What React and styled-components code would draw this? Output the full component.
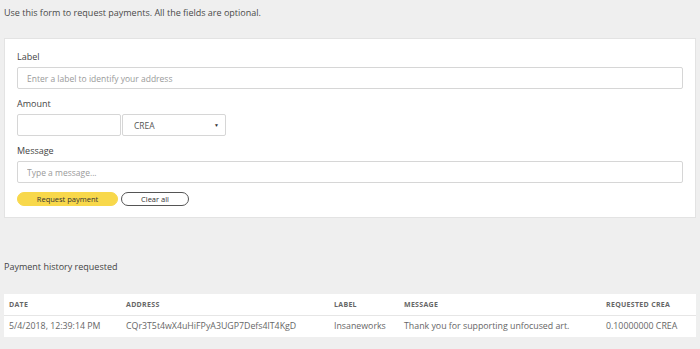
import React from "react";
import styled, { createGlobalStyle } from "styled-components";

const Global = createGlobalStyle`
  html, body { margin: 0; padding: 0; background: #efefef; }
  body { font-family: "Open Sans", "Noto Sans", sans-serif; color: #444; }
  * { box-sizing: border-box; }
`;

const Page = styled.div`
  width: 700px;
  height: 349px;
  padding: 0 4px;
  overflow: hidden;
`;

const Intro = styled.p`
  margin: 0;
  padding-top: 6px;
  font-size: 9px;
  line-height: 14px;
  color: #4a4a4a;
`;

const Card = styled.div`
  margin-top: 18px;
  background: #fff;
  border: 1px solid #e3e3e3;
  padding: 11px 12px 11px 12px;
  display: flex;
  flex-direction: column;
`;

const FieldLabel = styled.div`
  font-size: 9px;
  line-height: 14px;
  color: #444;
  margin-top: ${(p) => (p.$first ? "0" : "8px")};
  margin-bottom: 3px;
`;

const TextInput = styled.input`
  display: block;
  width: ${(p) => p.$w || "100%"};
  height: 22px;
  border: 1px solid #d6d6d6;
  border-radius: 2px;
  padding: 0 9px;
  font-family: inherit;
  font-size: 8.5px;
  color: #444;
  background: #fff;
  outline: none;
  &::placeholder { color: #9a9a9a; }
`;

const AmountRow = styled.div`
  display: flex;
  gap: 1px;
`;

const SelectBox = styled.div`
  width: 104px;
  height: 22px;
  border: 1px solid #d6d6d6;
  border-radius: 2px;
  padding: 0 6px 0 11px;
  display: flex;
  align-items: center;
  justify-content: space-between;
  font-size: 8.5px;
  color: #555;
`;

const Caret = styled.span`
  font-size: 5px;
  color: #333;
`;

const Buttons = styled.div`
  display: flex;
  gap: 3px;
  margin-top: 9px;
`;

const Button = styled.button`
  height: 14px;
  width: ${(p) => p.$w};
  border-radius: 7px;
  font-family: inherit;
  font-size: 7.5px;
  line-height: 12px;
  padding: 0;
  color: #333;
  cursor: pointer;
  background: ${(p) => (p.$primary ? "#f8d84b" : "#fff")};
  border: 1px solid ${(p) => (p.$primary ? "#f8d84b" : "#555")};
`;

const SectionTitle = styled.div`
  margin-top: 42px;
  font-size: 9px;
  line-height: 14px;
  color: #444;
`;

const TableCard = styled.table`
  margin-top: 20px;
  width: 100%;
  border-collapse: collapse;
  background: #fff;
  table-layout: fixed;
`;

const Th = styled.th`
  text-align: left;
  font-weight: 700;
  font-size: 7px;
  letter-spacing: 0.3px;
  color: #666;
  height: 21px;
  padding: 0 0 0 5px;
  border-bottom: 1px solid #e6e6e6;
`;

const Td = styled.td`
  font-size: 8.8px;
  color: #666;
  height: 22px;
  padding: 0 0 0 5px;
  white-space: nowrap;
`;

export default function App() {
  return (
    <Page>
      <Global />
      <Intro>Use this form to request payments. All the fields are optional.</Intro>
      <Card>
        <FieldLabel $first>Label</FieldLabel>
        <TextInput placeholder="Enter a label to identify your address" />
        <FieldLabel>Amount</FieldLabel>
        <AmountRow>
          <TextInput $w="104px" />
          <SelectBox>
            <span>CREA</span>
            <Caret>▼</Caret>
          </SelectBox>
        </AmountRow>
        <FieldLabel>Message</FieldLabel>
        <TextInput placeholder="Type a message..." />
        <Buttons>
          <Button $primary $w="101px">Request payment</Button>
          <Button $w="68px">Clear all</Button>
        </Buttons>
      </Card>
      <SectionTitle>Payment history requested</SectionTitle>
      <TableCard>
        <colgroup>
          <col style={{ width: "117px" }} />
          <col style={{ width: "208px" }} />
          <col style={{ width: "70px" }} />
          <col style={{ width: "202px" }} />
          <col />
        </colgroup>
        <thead>
          <tr>
            <Th>DATE</Th>
            <Th>ADDRESS</Th>
            <Th>LABEL</Th>
            <Th>MESSAGE</Th>
            <Th>REQUESTED CREA</Th>
          </tr>
        </thead>
        <tbody>
          <tr>
            <Td>5/4/2018, 12:39:14 PM</Td>
            <Td>CQr3T5t4wX4uHiFPyA3UGP7Defs4lT4KgD</Td>
            <Td>Insaneworks</Td>
            <Td>Thank you for supporting unfocused art.</Td>
            <Td>0.10000000 CREA</Td>
          </tr>
        </tbody>
      </TableCard>
    </Page>
  );
}
